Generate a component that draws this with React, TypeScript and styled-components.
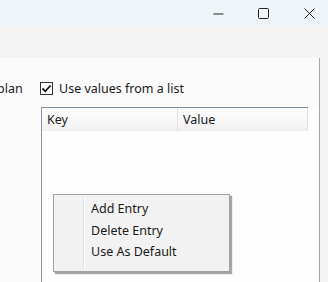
import React from "react";
import styled, { createGlobalStyle } from "styled-components";

const Global = createGlobalStyle`
  html, body { margin: 0; padding: 0; background: #f4f4f4; }
  body { font-family: "Noto Sans", "Segoe UI", sans-serif; font-size: 12px; color: #1a1a1a; }
`;

const Window = styled.div`
  width: 328px;
  height: 282px;
  display: flex;
  flex-direction: column;
  overflow: hidden;
  background: #f4f4f4;
`;

const TitleBar = styled.div`
  height: 26px;
  flex: none;
  background: #eef4f7;
  display: flex;
  justify-content: flex-end;
  gap: 15.5px;
  padding-right: 4px;
`;

const CaptionButton = styled.div`
  width: 30px;
  height: 26px;
  display: flex;
  align-items: center;
  justify-content: center;
`;

const Body = styled.div`
  flex: 1;
  display: flex;
  flex-direction: column;
  padding-top: 32px;
  min-height: 0;
`;

const Panel = styled.div`
  flex: 1;
  width: 319px;
  background: #fbfbfb;
  border-right: 1px solid #a5a5a5;
  display: flex;
  flex-direction: column;
  position: relative;
  min-height: 0;
`;

const OptionRow = styled.div`
  height: 20px;
  margin-top: 20px;
  display: flex;
  align-items: center;
`;

const Label = styled.span`
  width: 43px;
  margin-left: -3px;
  white-space: nowrap;
  font-size: 12.5px;
`;

const CheckBox = styled.div`
  width: 11px;
  height: 11px;
  border: 1px solid #333;
  background: #fff;
  display: flex;
  align-items: center;
  justify-content: center;
  margin-right: 6px;
`;

const CheckText = styled.span`
  font-size: 12.5px;
`;

const ListBox = styled.div`
  margin-left: 41px;
  margin-top: 9px;
  flex: 1;
  border-left: 1px solid #8697a5;
  background: #fdfdfd;
  display: flex;
  flex-direction: column;
`;

const Header = styled.div`
  width: 266px;
  height: 22px;
  border-top: 1px solid #7b8e9a;
  display: flex;
  background: linear-gradient(#ffffff, #f1f1f1);
  border-bottom: 1px solid #ebebeb;
`;

const HeaderCell = styled.div<{ $w: number }>`
  width: ${(p) => p.$w}px;
  padding-left: 5px;
  box-sizing: border-box;
  display: flex;
  align-items: center;
  font-size: 12.5px;
  border-right: 1px solid #e3e3e3;
`;

const Menu = styled.div`
  position: absolute;
  left: 53px;
  top: 136px;
  width: 175px;
  height: 70px;
  background: #f2f2f2;
  border: 1px solid #a0a0a0;
  box-shadow: 2px 2px 1px rgba(0, 0, 0, 0.35);
  display: flex;
  flex-direction: column;
  padding: 3px 0;
  box-sizing: content-box;
`;

const MenuItem = styled.div`
  height: 21.5px;
  display: flex;
  align-items: center;
  padding-left: 37px;
  font-size: 12.5px;
  position: relative;
`;

const Gutter = styled.div`
  position: absolute;
  left: 29px;
  top: 2px;
  bottom: 2px;
  width: 1px;
  background: #e2e2e2;
  border-right: 1px solid #fff;
`;

export default function App() {
  return (
    <Window>
      <Global />
      <TitleBar>
        <CaptionButton>
          <svg width="11" height="11" viewBox="0 0 11 11">
            <path d="M0.5 6h10" stroke="#222" strokeWidth="1" />
          </svg>
        </CaptionButton>
        <CaptionButton>
          <svg width="11" height="11" viewBox="0 0 11 11">
            <rect x="0.5" y="0.5" width="10" height="10" rx="1" fill="none" stroke="#222" strokeWidth="1" />
          </svg>
        </CaptionButton>
        <CaptionButton>
          <svg width="11" height="11" viewBox="0 0 11 11">
            <path d="M0.5 0.5l10 10M10.5 0.5l-10 10" stroke="#222" strokeWidth="1" />
          </svg>
        </CaptionButton>
      </TitleBar>
      <Body>
        <Panel>
          <OptionRow>
            <Label>plan</Label>
            <CheckBox>
              <svg width="11" height="11" viewBox="0 0 11 11">
                <path d="M1.5 5.5l2.8 2.8L9.5 2.5" fill="none" stroke="#111" strokeWidth="1.8" />
              </svg>
            </CheckBox>
            <CheckText>Use values from a list</CheckText>
          </OptionRow>
          <ListBox>
            <Header>
              <HeaderCell $w={136}>Key</HeaderCell>
              <HeaderCell $w={130}>Value</HeaderCell>
            </Header>
          </ListBox>
          <Menu>
            <Gutter />
            <MenuItem>Add Entry</MenuItem>
            <MenuItem>Delete Entry</MenuItem>
            <MenuItem>Use As Default</MenuItem>
          </Menu>
        </Panel>
      </Body>
    </Window>
  );
}
